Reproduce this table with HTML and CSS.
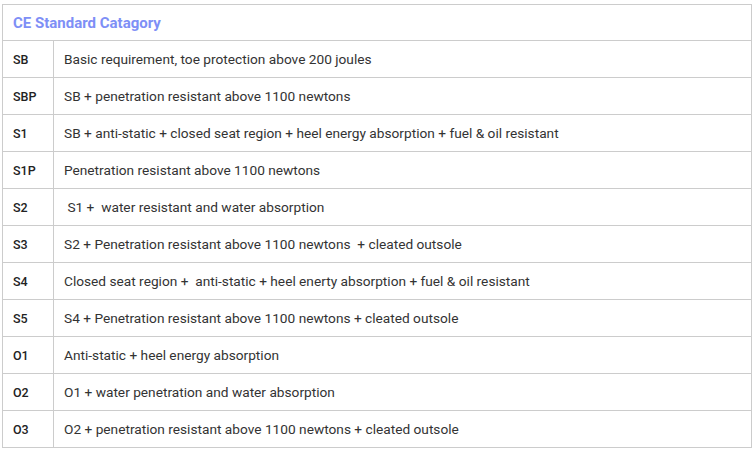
FILE: index.html
```html
<!DOCTYPE html>
<html>
<head>
<meta charset="utf-8">
<link rel="stylesheet" href="styles.css">
</head>
<body>
<table class="ce-table">
  <thead>
    <tr><th colspan="2" class="title">CE Standard Catagory</th></tr>
  </thead>
  <tbody>
    <tr><td class="code">SB</td><td class="desc">Basic requirement, toe protection above 200 joules</td></tr>
    <tr><td class="code">SBP</td><td class="desc">SB + penetration resistant above 1100 newtons</td></tr>
    <tr><td class="code">S1</td><td class="desc">SB + anti-static + closed seat region + heel energy absorption + fuel &amp; oil resistant</td></tr>
    <tr><td class="code">S1P</td><td class="desc">Penetration resistant above 1100 newtons</td></tr>
    <tr><td class="code">S2</td><td class="desc">&nbsp;S1 +&nbsp; water resistant and water absorption</td></tr>
    <tr><td class="code">S3</td><td class="desc">S2 + Penetration resistant above 1100 newtons&nbsp; + cleated outsole</td></tr>
    <tr><td class="code">S4</td><td class="desc">Closed seat region +&nbsp; anti-static + heel enerty absorption + fuel &amp; oil resistant</td></tr>
    <tr><td class="code">S5</td><td class="desc">S4 + Penetration resistant above 1100 newtons + cleated outsole</td></tr>
    <tr><td class="code">O1</td><td class="desc">Anti-static + heel energy absorption</td></tr>
    <tr><td class="code">O2</td><td class="desc">O1 + water penetration and water absorption</td></tr>
    <tr><td class="code">O3</td><td class="desc">O2 + penetration resistant above 1100 newtons + cleated outsole</td></tr>
  </tbody>
</table>
</body>
</html>
```
FILE: styles.css
```css
html, body {
  margin: 0;
  background: #fff;
}
body {
  padding: 4px 0 0 2px;
  font-family: Roboto, "Liberation Sans", sans-serif;
}
.ce-table {
  border-collapse: collapse;
  width: 750px;
}
.ce-table th, .ce-table td {
  border: 1px solid #cccccc;
  padding: 0;
  text-align: left;
}
.title {
  height: 35px;
  padding-left: 10px !important;
  font-size: 15px;
  font-weight: bold;
  color: #7e8ff6;
}
.ce-table td {
  height: 36px;
}
.code {
  width: 40px;
  padding-left: 10px !important;
  font-size: 12.5px;
  font-weight: 500;
  color: #222;
}
.desc {
  padding-left: 10px !important;
  font-size: 13.7px;
  color: #333;
}
```
